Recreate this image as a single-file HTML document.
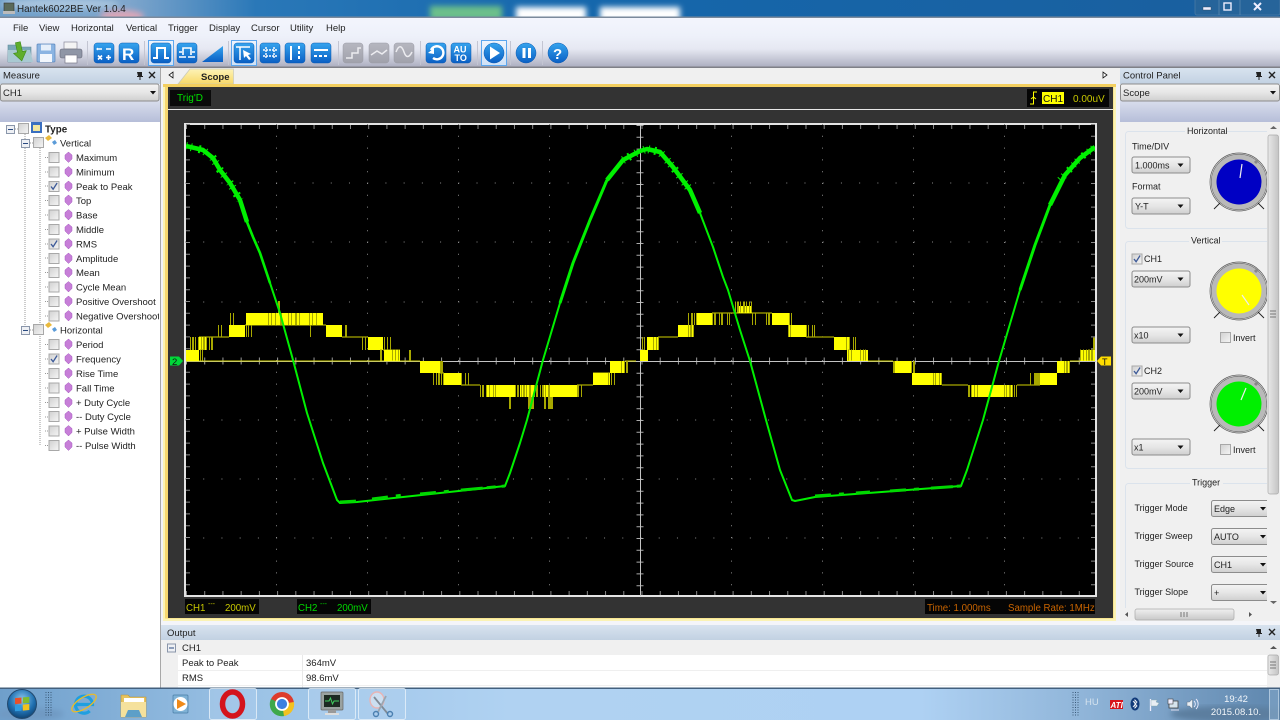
<!DOCTYPE html>
<html><head><meta charset="utf-8"><title>Hantek6022BE</title>
<style>
html,body{margin:0;padding:0;background:#f0f0f0;overflow:hidden}
svg{display:block;font-family:"Liberation Sans",sans-serif;font-size:9.5px}
text{fill:#222}
</style></head><body>
<svg width="1280" height="720" viewBox="0 0 1280 720" xmlns="http://www.w3.org/2000/svg" shape-rendering="auto">
<defs>
<linearGradient id="gT" x1="0" x2="1" y1="0" y2="0"><stop offset="0" stop-color="#6e9fc9"/><stop offset=".1" stop-color="#7fa6cc"/><stop offset=".2" stop-color="#2a78b8"/><stop offset=".45" stop-color="#1567ac"/><stop offset="1" stop-color="#1a5f9e"/></linearGradient>
<linearGradient id="gBar" x1="0" x2="0" y1="0" y2="1"><stop offset="0" stop-color="#f3f5fd"/><stop offset=".35" stop-color="#eef1fa"/><stop offset=".62" stop-color="#e6e8f2"/><stop offset="1" stop-color="#a9abbd"/></linearGradient>
<linearGradient id="gHead" x1="0" x2="0" y1="0" y2="1"><stop offset="0" stop-color="#d8e3ef"/><stop offset="1" stop-color="#c2d1e2"/></linearGradient>
<linearGradient id="gBand" x1="0" x2="0" y1="0" y2="1"><stop offset="0" stop-color="#f5f7fc"/><stop offset="1" stop-color="#b6bed9"/></linearGradient>
<linearGradient id="gCombo" x1="0" x2="0" y1="0" y2="1"><stop offset="0" stop-color="#f4f4f4"/><stop offset=".5" stop-color="#e6e6e6"/><stop offset="1" stop-color="#cfcfcf"/></linearGradient>
<linearGradient id="gCb" x1="0" x2="1" y1="0" y2="1"><stop offset="0" stop-color="#d0d0d0"/><stop offset="1" stop-color="#f6f6f6"/></linearGradient>
<linearGradient id="gBlue" x1="0" x2="0" y1="0" y2="1"><stop offset="0" stop-color="#36a4ee"/><stop offset="1" stop-color="#0a5fc4"/></linearGradient>
<linearGradient id="gGrey" x1="0" x2="0" y1="0" y2="1"><stop offset="0" stop-color="#b6b7c0"/><stop offset="1" stop-color="#a0a1ab"/></linearGradient>
<linearGradient id="gSel" x1="0" x2="0" y1="0" y2="1"><stop offset="0" stop-color="#eef5fd"/><stop offset="1" stop-color="#cfe1f6"/></linearGradient>
<linearGradient id="gTab" x1="0" x2="0" y1="0" y2="1"><stop offset="0" stop-color="#fdf3b8"/><stop offset="1" stop-color="#f8d968"/></linearGradient>
<linearGradient id="gTask" x1="0" x2="1" y1="0" y2="0"><stop offset="0" stop-color="#6f9fcb"/><stop offset=".2" stop-color="#9cc3e6"/><stop offset=".4" stop-color="#b0d2f2"/><stop offset=".72" stop-color="#aed1f3"/><stop offset=".85" stop-color="#8fb4d8"/><stop offset="1" stop-color="#5e86ad"/></linearGradient>
<linearGradient id="gSb" x1="0" x2="1" y1="0" y2="0"><stop offset="0" stop-color="#e8e8e8"/><stop offset="1" stop-color="#c4c4c4"/></linearGradient>
<linearGradient id="gSbH" x1="0" x2="0" y1="0" y2="1"><stop offset="0" stop-color="#f0f0f0"/><stop offset="1" stop-color="#c8c8c8"/></linearGradient>
<radialGradient id="gOrb" cx=".5" cy=".35" r=".7"><stop offset="0" stop-color="#8cc8ee"/><stop offset=".6" stop-color="#1f6fb0"/><stop offset="1" stop-color="#0c3a66"/></radialGradient>
<filter id="b3"><feGaussianBlur stdDeviation="3"/></filter>
<clipPath id="cpR"><rect x="1120" y="122" width="147" height="486"/></clipPath>
<clipPath id="cpT"><rect x="0" y="122" width="159" height="500"/></clipPath>
<clipPath id="cpS"><rect x="186" y="126" width="909" height="468"/></clipPath>
<g id="cb"><rect x=".5" y=".5" width="10" height="10" fill="url(#gCb)" stroke="#a8a8a8"/></g>
<g id="ck"><rect x=".5" y=".5" width="10" height="10" fill="url(#gCb)" stroke="#a8a8a8"/><path d="M2.500 5.500L4.600 8.200L8.600 2" fill="none" stroke="#3d5a98" stroke-width="1.300"/></g>
<path id="dm" d="M4 0L7.500 3L7.500 7L4 10.500L.5 7L.5 3Z" fill="#c77fd8" stroke="#a65cc0" stroke-width=".5"/>
<g id="co"><rect x=".5" y=".5" width="58" height="16" rx="2" fill="url(#gCombo)" stroke="#8c8c8c"/><path d="M46 7h6l-3 3.500z" fill="#111"/></g>
<g id="ct"><rect x=".5" y=".5" width="70" height="16" rx="2" fill="url(#gCombo)" stroke="#8c8c8c"/><path d="M49 7h6l-3 3.500z" fill="#111"/></g>
<g id="knob"><circle r="29" fill="#efefef" stroke="#555" stroke-width=".7"/><circle r="27.800" fill="#b9b9b9" stroke="#666" stroke-width=".6"/><path d="M16 -19L19 -22" stroke="#888" stroke-width="3"/><path d="M-19 21L-25 27M19 21L25 27" stroke="#222" stroke-width=".9"/></g>
<rect id="ib" width="20" height="20" rx="3" fill="url(#gBlue)" stroke="#0d5ab0" stroke-width=".5"/>
<rect id="ig" width="20" height="20" rx="3" fill="url(#gGrey)" stroke="#9a9ba5" stroke-width=".5"/>
<rect id="is" width="25" height="25" fill="url(#gSel)" stroke="#5ba6ee"/>
<circle id="ic" cx="10" cy="10" r="10" fill="url(#gBlue)" stroke="#0d5ab0" stroke-width=".5"/>
<g id="boxm"><rect x=".5" y=".5" width="8" height="8" fill="#eef0f4" stroke="#8a96aa"/><path d="M2 4.500h5" stroke="#2a4a80"/></g>
</defs>

<!-- title bar -->
<rect width="1280" height="18" fill="url(#gT)"/>
<g filter="url(#b3)"><ellipse cx="122" cy="16" rx="22" ry="6" fill="#d9a6b8"/><rect x="430" y="6" width="72" height="14" fill="#6cc08a"/><rect x="516" y="7" width="70" height="14" fill="#fff"/><rect x="600" y="7" width="80" height="14" fill="#fff"/><ellipse cx="60" cy="4" rx="60" ry="6" fill="#a7c4de"/></g>
<rect x="4" y="3" width="10" height="9" fill="#5a6a5a" stroke="#333" stroke-width=".6"/><rect x="3" y="11" width="12" height="3" fill="#bbb"/>
<text x="17" y="12" font-size="9.900" fill="#10202c">Hantek6022BE Ver 1.0.4</text>
<g><rect x="1195" y="-2" width="85" height="17" rx="2" fill="#26649a" stroke="#4a7ba6" stroke-width=".8"/><path d="M1219 0v15M1240 0v15" stroke="#5f8cb2" stroke-width=".7"/><rect x="1203" y="7" width="8" height="3" fill="#eef" stroke="#345" stroke-width=".4"/><rect x="1224" y="3" width="7" height="7" fill="none" stroke="#eef" stroke-width="1.400"/><path d="M1254 3l7 7M1261 3l-7 7" stroke="#eef" stroke-width="2"/></g>
<rect y="16.500" width="1280" height="1.500" fill="#7b8a9c"/>

<!-- menu and toolbar -->
<rect y="18" width="1280" height="50" fill="url(#gBar)"/>
<g font-size="9.500" fill="#1a1a2a">
<text x="13" y="31">File</text><text x="39" y="31">View</text><text x="71" y="31">Horizontal</text><text x="126" y="31">Vertical</text><text x="168" y="31">Trigger</text><text x="209" y="31">Display</text><text x="251" y="31">Cursor</text><text x="290" y="31">Utility</text><text x="326" y="31">Help</text>
</g>
<!-- toolbar icons -->
<path d="M8 45h8l2 2h13v15H8z" fill="#7ba8b8" stroke="#5f8a9a" stroke-width=".6"/><path d="M8 50h22l3 12H8z" fill="#a9c9d2"/><path d="M17 42h5v10h4l-6.500 9L13 52h4z" fill="#5fae2c" stroke="#3e8a18" stroke-width=".6" transform="rotate(-12 20 50)"/>
<rect x="37" y="44" width="18" height="18" rx="1" fill="#8bb4e2" stroke="#5b86bc" stroke-width=".7"/><rect x="41" y="44.500" width="10" height="6" fill="#e6effa"/><rect x="40" y="54" width="12" height="8" fill="#f2f6fc"/>
<rect x="64" y="42" width="13" height="7" fill="#f4f4f4" stroke="#889" stroke-width=".7"/><rect x="60" y="49" width="22" height="9" rx="2" fill="#8f96a6" stroke="#667" stroke-width=".6"/><rect x="65" y="55" width="12" height="8" fill="#fff" stroke="#778" stroke-width=".7"/>
<path d="M87.500 41v24M144.500 41v24M228.500 41v24M338.500 41v24M420.500 41v24M477.500 41v24M510.500 41v24M542.500 41v24" stroke="#c3c5d2"/>
<use href="#ib" x="94" y="43"/><path d="M98 49h4M106 49h5M98 55.500l4 4M102 55.500l-4 4M106 57.500h5M108.500 55v5" stroke="#fff" stroke-width="1.600" fill="none"/><path d="M96 49l2-1.500v3z" fill="#fff"/>
<use href="#ib" x="119" y="43"/><text x="122" y="60" font-size="17" font-weight="bold" style="fill:#fff">R</text>
<use href="#is" x="148.500" y="40.500"/><use href="#ib" x="151" y="43"/><path d="M153 58h4V48h8v10h4" fill="none" stroke="#fff" stroke-width="2"/>
<use href="#ib" x="177" y="43"/><path d="M183 55V48h8v7" fill="none" stroke="#fff" stroke-width="1.600"/><path d="M179 57h7M188 57h7M179 52h3M192 52h3" stroke="#fff" stroke-width="1.600"/>
<path d="M202 62L223 46V62Z" fill="url(#gBlue)"/>
<use href="#is" x="231.500" y="40.500"/><use href="#ib" x="234" y="43"/><path d="M236 47h14M240 47v13" stroke="#fff" stroke-width="1.500"/><path d="M243 50l8 4-3 1 3 4-2 1-3-4-2 2z" fill="#fff"/>
<use href="#ib" x="260" y="43"/><path d="M266 47v12M274 47v12M263 50h14M263 56h14" stroke="#fff" stroke-width="1.400" stroke-dasharray="2 1"/>
<use href="#ib" x="285" y="43"/><path d="M291 46v14" stroke="#fff" stroke-width="2"/><path d="M299 46v14" stroke="#fff" stroke-width="2" stroke-dasharray="3 2"/>
<use href="#ib" x="311" y="43"/><path d="M314 50h14" stroke="#fff" stroke-width="2"/><path d="M314 56h14" stroke="#fff" stroke-width="2" stroke-dasharray="3 2"/>
<use href="#ig" x="343" y="43"/><path d="M346 58h6v-5h6v-5h3" fill="none" stroke="#ececf0" stroke-width="1.500"/>
<use href="#ig" x="369" y="43"/><path d="M371 55l6-4 5 3 5-4" fill="none" stroke="#ececf0" stroke-width="1.500"/>
<use href="#ig" x="394" y="43"/><path d="M396 52c3-8 6-6 8 0s5 6 8 0" fill="none" stroke="#ececf0" stroke-width="1.500"/>
<use href="#ib" x="426" y="43"/><path d="M431 50a6.500 6.500 0 1 1 2 8" fill="none" stroke="#fff" stroke-width="2.400"/><path d="M428 53l6-5v6z" fill="#fff"/>
<use href="#ib" x="451" y="43"/><text x="453.500" y="52.500" font-size="9" font-weight="bold" style="fill:#fff">AU</text><text x="454.500" y="61" font-size="9" font-weight="bold" style="fill:#fff">TO</text>
<use href="#is" x="481.500" y="40.500"/><use href="#ic" x="484" y="43"/><path d="M490 46.500l10 6.500-10 6.500z" fill="#fff"/>
<use href="#ic" x="516" y="43"/><path d="M522.500 48h3v10h-3zM528 48h3v10h-3z" fill="#fff"/>
<use href="#ic" x="548" y="43"/><text x="553" y="59" font-size="15" font-weight="bold" style="fill:#fff">?</text>
<rect y="66.500" width="1280" height="1.500" fill="#7f8087"/>

<!-- left panel -->
<rect y="68" width="160" height="620" fill="#fff"/>
<rect y="68" width="160" height="16" fill="url(#gHead)"/>
<text x="3" y="78.500" font-size="9.500" fill="#4a5a6c">Measure</text>
<path d="M137 72h5v4h1v1h-2.500v3h-1v-3H137v-1h1z" fill="#222"/><path d="M149 72l6 6M155 72l-6 6" stroke="#222" stroke-width="1.400"/>
<rect y="84" width="160" height="38" fill="url(#gBand)"/>
<rect x=".5" y="84" width="158.500" height="17" rx="2" fill="url(#gCombo)" stroke="#8c8c8c"/><text x="3" y="96" font-size="9.500">CH1</text><path d="M150 91h6l-3 3.500z" fill="#111"/>
<rect x="160" y="68" width="1" height="620" fill="#a8a8a8"/>

<!-- tree -->
<g clip-path="url(#cpT)">
<path d="M25 134V330M40 148V445M13 129h6M30 143h3M45 157.500h3M45 172h3M45 186h3M45 200.500h3M45 215h3M45 229.500h3M45 244h3M45 258h3M45 272.500h3M45 287h3M45 301.500h3M45 316h3M30 330h3M45 344.500h3M45 359h3M45 373.500h3M45 388h3M45 402.500h3M45 417h3M45 431h3M45 445.500h3" stroke="#999" stroke-dasharray="1 1" fill="none"/>
<use href="#boxm" x="6" y="125"/><use href="#cb" x="18" y="123"/><rect x="31" y="122" width="11" height="11" fill="#3a6fc0"/><rect x="33" y="125" width="7" height="6" fill="#f2e6a0"/>
<text x="45" y="132.500" font-weight="bold" font-size="9.800" fill="#111">Type</text>
<use href="#boxm" x="21" y="139"/><use href="#cb" x="33" y="137"/><path d="M45 138l4-3 3 3-4 3z" fill="#e9b93c"/><path d="M52 142l3-2 2 3-3 2z" fill="#5b9bd8"/>
<text x="60" y="146.500">Vertical</text>
<use href="#boxm" x="21" y="326"/><use href="#cb" x="33" y="324"/><path d="M45 325l4-3 3 3-4 3z" fill="#e9b93c"/><path d="M52 329l3-2 2 3-3 2z" fill="#5b9bd8"/>
<text x="60" y="333.500">Horizontal</text>
<use href="#cb" x="48.500" y="152"/><use href="#dm" x="64.500" y="152"/><text x="76" y="161">Maximum</text>
<use href="#cb" x="48.500" y="166.500"/><use href="#dm" x="64.500" y="166.500"/><text x="76" y="175.500">Minimum</text>
<use href="#ck" x="48.500" y="181"/><use href="#dm" x="64.500" y="181"/><text x="76" y="190">Peak to Peak</text>
<use href="#cb" x="48.500" y="195"/><use href="#dm" x="64.500" y="195"/><text x="76" y="204">Top</text>
<use href="#cb" x="48.500" y="209.500"/><use href="#dm" x="64.500" y="209.500"/><text x="76" y="218.500">Base</text>
<use href="#cb" x="48.500" y="224"/><use href="#dm" x="64.500" y="224"/><text x="76" y="233">Middle</text>
<use href="#ck" x="48.500" y="238.500"/><use href="#dm" x="64.500" y="238.500"/><text x="76" y="247.500">RMS</text>
<use href="#cb" x="48.500" y="253"/><use href="#dm" x="64.500" y="253"/><text x="76" y="262">Amplitude</text>
<use href="#cb" x="48.500" y="267"/><use href="#dm" x="64.500" y="267"/><text x="76" y="276">Mean</text>
<use href="#cb" x="48.500" y="281.500"/><use href="#dm" x="64.500" y="281.500"/><text x="76" y="290.500">Cycle Mean</text>
<use href="#cb" x="48.500" y="296"/><use href="#dm" x="64.500" y="296"/><text x="76" y="305">Positive Overshoot</text>
<use href="#cb" x="48.500" y="310.500"/><use href="#dm" x="64.500" y="310.500"/><text x="76" y="319.500">Negative Overshoot</text>
<use href="#cb" x="48.500" y="339"/><use href="#dm" x="64.500" y="339"/><text x="76" y="348">Period</text>
<use href="#ck" x="48.500" y="353.500"/><use href="#dm" x="64.500" y="353.500"/><text x="76" y="362.500">Frequency</text>
<use href="#cb" x="48.500" y="368"/><use href="#dm" x="64.500" y="368"/><text x="76" y="377">Rise Time</text>
<use href="#cb" x="48.500" y="382.500"/><use href="#dm" x="64.500" y="382.500"/><text x="76" y="391.500">Fall Time</text>
<use href="#cb" x="48.500" y="397"/><use href="#dm" x="64.500" y="397"/><text x="76" y="406">+ Duty Cycle</text>
<use href="#cb" x="48.500" y="411"/><use href="#dm" x="64.500" y="411"/><text x="76" y="420">-- Duty Cycle</text>
<use href="#cb" x="48.500" y="425.500"/><use href="#dm" x="64.500" y="425.500"/><text x="76" y="434.500">+ Pulse Width</text>
<use href="#cb" x="48.500" y="440"/><use href="#dm" x="64.500" y="440"/><text x="76" y="449">-- Pulse Width</text>
</g>

<!-- tab strip -->
<rect x="161" y="68" width="959" height="16" fill="#f0f0f0"/>
<path d="M178 84L190 69H233.500V84Z" fill="url(#gTab)" stroke="#c9c9b8" stroke-width=".7"/>
<text x="201" y="80" font-weight="bold" font-size="9.500" fill="#222">Scope</text>
<path d="M173 72v6l-4-3z" fill="#fff" stroke="#111" stroke-width=".8"/><path d="M1103 72v6l4-3z" fill="#fff" stroke="#111" stroke-width=".8"/>

<!-- scope frame -->
<rect x="161" y="84" width="959" height="541" fill="#f1f2f8"/>
<rect x="163" y="84" width="953" height="537.500" fill="#fbf3b4"/>
<rect x="163" y="84" width="953" height="3" fill="#f3cf5f"/>
<rect x="165" y="87" width="948.500" height="531.500" fill="#f6d76f"/>
<rect x="168" y="87" width="945" height="531" fill="#333"/>
<rect x="168" y="109" width="945" height="1" fill="#e8e8e8"/>
<rect x="170" y="90" width="41" height="16" fill="#0a0a0a"/><text x="177" y="101" font-size="10" style="fill:#00e000">Trig'D</text>
<rect x="1027" y="89" width="82" height="18" fill="#050505"/>
<path d="M1030 104h3.500V92h3.500M1031 99l2.500-2 2.500 2" fill="none" stroke="#ffff00" stroke-width="1"/>
<rect x="1042" y="92" width="22" height="12" fill="#ffff00"/><text x="1043" y="102" font-size="10" style="fill:#111">CH1</text>
<text x="1073" y="102" font-size="10" style="fill:#c8c800">0.00uV</text>

<!-- screen -->
<rect x="185" y="124" width="911" height="472" fill="#000" stroke="#e4e4e4" stroke-width="2"/>
<g stroke="#8a8a8a" fill="none">
<path d="M185 183H1096M185 242H1096M185 302H1096M185 420H1096M185 479H1096M185 538H1096" stroke-dasharray="1 17.220"/>
<path d="M276.500 124V596M367.500 124V596M458.500 124V596M549.500 124V596M731.500 124V596M822.500 124V596M913.500 124V596M1004.500 124V596" stroke-dasharray="1 10.800"/>
<path d="M186 127H1096M186 593H1096" stroke-width="4" stroke-dasharray="1 17.220" stroke="#888"/>
<path d="M188 124V596M1093 124V596" stroke-width="4" stroke-dasharray="1 10.800" stroke="#888"/>
</g>
<g fill="none">
<path d="M186 361H1096" stroke-width="7" stroke-dasharray="1 17.220" stroke="#999"/>
<path d="M640 125V596" stroke-width="7" stroke-dasharray="1 10.800" stroke="#aaa"/>
<path d="M186 361.500H1096M640.500 125V596" stroke="#c4c4c4"/>
</g>

<g clip-path="url(#cpS)">
<!-- yellow connecting lines -->
<path d="M186 361H420M199 337H229M245 325H326M342 337H368M383 350H400M400 361H420M440 373H444M461 385H480M577 385H593M610 373H593M625 361H636M658 337H678M712 313H772M806 337H834M868 361H893M942 385H968M1017 385H1040M1070 361H1080" stroke="#d0d000" fill="none"/>
<!-- yellow blocks -->
<path fill="#ffff00" d="M186 350H199V361H186ZM198 337H206V350H198ZM229 325H245V337H229ZM246 313H323V325H246ZM326 325H342V337H326ZM368 337H383V350H368ZM384 350H400V361H384ZM420 361H440V373H420ZM444 373H461V385H444ZM486 385H515V397H486ZM520 385H534V397H520ZM543 385H577V397H543ZM593 373H610V385H593ZM610 361H625V373H610ZM640 350H648V361H640ZM647 337H658V350H647ZM678 325H693V337H678ZM697 313H712V325H697ZM738 306H752V313H738ZM772 313H789V325H772ZM789 325H806V337H789ZM834 337H849V350H834ZM847 350H868V361H847ZM893 361H912V373H893ZM912 373H942V385H912ZM972 385H1012V397H972ZM1040 373H1057V385H1040ZM1057 361H1070V373H1057ZM1080 350H1093V361H1080Z"/>
<!-- spikes -->
<g fill="none" stroke="#a8a800">
<path d="M190 343.500H205" stroke-width="13" stroke-dasharray="1 1 2 1 1 2 1 2"/>
<path d="M206 343.500H214" stroke-width="13" stroke-dasharray="1 2 1 1 2"/>
<path d="M200 355H203" stroke-width="11" stroke-dasharray="1 1"/>
<path d="M218 331H252" stroke-width="12" stroke-dasharray="1 2 1 24 1 1 1 2 1"/>
<path d="M230 319H244" stroke-width="12" stroke-dasharray="1 2 1 10"/>
<path d="M268 319H320" stroke-width="12" stroke-dasharray="1 2 1 3 1 4 2 6 1 2 1 3 2 2 1 9"/>
<path d="M278 307H280" stroke-width="12"/>
<path d="M310 331H311" stroke-width="12"/>
<path d="M345 331H347" stroke-width="12"/>
<path d="M362 343.500H367" stroke-width="13" stroke-dasharray="1 2 1"/>
<path d="M384 343.500H392" stroke-width="13" stroke-dasharray="1 2 1 2 1"/>
<path d="M380 355H400" stroke-width="11" stroke-dasharray="2 10 1 2 1 2 1"/>
<path d="M409 355.500H411" stroke-width="11"/>
<path d="M440 367H443" stroke-width="12"/>
<path d="M433 379H444" stroke-width="12" stroke-dasharray="1 2 1 1 2 1 1"/>
<path d="M461 379H470" stroke-width="12" stroke-dasharray="1 3 1 2 1"/>
<path d="M480 391H497" stroke-width="12" stroke-dasharray="1 1 2 2 1 2 1 3 1"/>
<path d="M515 391H550" stroke-width="12" stroke-dasharray="1 1 2 2 1 1 2 1 1 2 2 3 1 1 2 2 1 1 2"/>
<path d="M577 391H583" stroke-width="12" stroke-dasharray="2 2 1"/>
<path d="M509 403H511M528 403H534M544 403H546M548 403H553" stroke-width="12"/>
<path d="M608 379H616" stroke-width="12" stroke-dasharray="1 2 1 2 1"/>
<path d="M621 367H628" stroke-width="12" stroke-dasharray="1 2 1"/>
<path d="M642 343.500H660" stroke-width="13" stroke-dasharray="1 1 1 8 1 2 1"/>
<path d="M688 331H695" stroke-width="12" stroke-dasharray="1 1 2 1 1"/>
<path d="M688 319H697" stroke-width="12" stroke-dasharray="1 2 2 1 1"/>
<path d="M712 319H730" stroke-width="12" stroke-dasharray="1 1 2 3 1 1 2 4 1"/>
<path d="M735 307H752" stroke-width="11" stroke-dasharray="1 1 2 1 1 2 2 1 1 2"/>
<path d="M752 319H770" stroke-width="12" stroke-dasharray="1 2 1 10 1"/>
<path d="M789 319H793" stroke-width="12" stroke-dasharray="1 1 1"/>
<path d="M806 331H815" stroke-width="12" stroke-dasharray="1 1 1 3 1 1 1"/>
<path d="M788 331H791" stroke-width="12" stroke-dasharray="1 1"/>
<path d="M846 343.500H856" stroke-width="13" stroke-dasharray="1 2 1 3 1"/>
<path d="M848 355H852M860 355H868" stroke-width="11" stroke-dasharray="1 2 1 1"/>
<path d="M893 367H915" stroke-width="12" stroke-dasharray="2 16 1 1 2"/>
<path d="M933 379H943" stroke-width="12" stroke-dasharray="1 1 1 3 1"/>
<path d="M968 391H978" stroke-width="12" stroke-dasharray="2 1 1 2 1"/>
<path d="M1004 391H1018" stroke-width="12" stroke-dasharray="1 1 1 2 2 1 1 1 1 1"/>
<path d="M1030 379H1031M1034 379H1040" stroke-width="12"/>
<path d="M1064 367H1071" stroke-width="12" stroke-dasharray="1 1 2 1 1"/>
<path d="M1080 355H1093" stroke-width="11" stroke-dasharray="1 2 1 2 1"/>
<path d="M1093 344H1095" stroke-width="13"/>
</g>
<path d="M1093 350H1096V361H1093Z" fill="#ffff00"/>
<!-- green trace -->
<path fill="none" stroke="#00f000" stroke-width="2" stroke-linejoin="round" d="M186 146L203 150L213 158L220 170L230 183L240 200L247 222L253 237L260 253L270 283L280 313L293 360L307 413L323 463L337 500L340 503L357 502L505 486L510 473L520 443L527 420L543 360L560 303L573 263L590 220L607 180L623 160L640 151L647 149L660 152L673 167L690 190L700 213L713 247L723 277L728 290L740 330L750 361L766 420L780 470L792 500L795 501L815 497L961 486L967 470L983 420L999 361L1020 290L1035 245L1050 205L1065 175L1080 158L1095 147"/>
<!-- green noise: thick solid core, sparse spikes -->
<g fill="none" stroke="#00f000" stroke-linejoin="round">
<path d="M186 146L203 150L213 158L220 170L230 183L240 200L247 222" stroke-width="4.500"/>
<path d="M607 180L623 160L640 151L647 149L660 152L673 167L690 190L700 213" stroke-width="4.500"/>
<path d="M1050 205L1065 175L1080 158L1095 147" stroke-width="4.500"/>
<path d="M560 303L573 263L590 220L607 180" stroke-width="3"/>
<path d="M1020 290L1035 245L1050 205" stroke-width="3"/>
<path d="M247 222L253 237L260 253L270 283" stroke-width="2.600"/>
<path d="M186 146L203 150L213 158L220 170L230 183L240 200" stroke-width="8" stroke-dasharray="1 4 1 7 2 5 1 9"/>
<path d="M623 160L640 151L647 149L660 152L673 167L690 190" stroke-width="8" stroke-dasharray="1 5 2 6 1 8 1 4"/>
<path d="M1060 180L1080 158L1095 147" stroke-width="7" stroke-dasharray="1 4 1 7 2 5"/>
<path d="M340 502L357 501M372 499L404 495M420 494L505 486M815 496L870 492M890 491L961 486" stroke-width="3" stroke-dasharray="16 8 5 12 22 4 9 6" stroke="#00d800"/>
</g>
</g>

<!-- markers -->
<path d="M170 356.500h9l4 4.500-4 4.500h-9z" fill="#00d838"/><text x="172" y="365" font-size="9.500" style="fill:#111">2</text>
<path d="M1111 356.500h-10l-4 4.500 4 4.500h10z" fill="#ffdd00"/><text x="1102" y="365" font-size="9" style="fill:#111">T</text>

<!-- status -->
<rect x="185" y="599" width="74" height="15" fill="#050505"/><rect x="297" y="599" width="74" height="15" fill="#050505"/><rect x="925" y="599" width="170" height="15" fill="#050505"/>
<g font-size="9.700">
<text x="186" y="611" style="fill:#c8c800">CH1</text><text x="208" y="606" font-size="7" style="fill:#c8c800">---</text><text x="225" y="611" style="fill:#c8c800">200mV</text>
<text x="298" y="611" style="fill:#00d800">CH2</text><text x="320" y="606" font-size="7" style="fill:#00d800">---</text><text x="337" y="611" style="fill:#00d800">200mV</text>
<text x="927" y="611" style="fill:#c86400">Time: 1.000ms</text><text x="1008" y="611" style="fill:#c86400">Sample Rate: 1MHz</text>
</g>

<!-- right panel -->
<rect x="1120" y="68" width="160" height="16" fill="url(#gHead)"/>
<text x="1123" y="78.500" fill="#4a5a6c">Control Panel</text>
<path d="M1256 72h5v4h1v1h-2.500v3h-1v-3H1256v-1h1z" fill="#222"/><path d="M1269 72l6 6M1275 72l-6 6" stroke="#222" stroke-width="1.400"/>
<rect x="1120" y="84" width="160" height="38" fill="url(#gBand)"/>
<rect x="1120.500" y="84" width="159" height="17" rx="2" fill="url(#gCombo)" stroke="#8c8c8c"/><text x="1123" y="96" font-size="9.500">Scope</text><path d="M1270 91h6l-3 3.500z" fill="#111"/>
<rect x="1120" y="122" width="160" height="503" fill="#f0f0f0"/>
<g clip-path="url(#cpR)" font-size="9">
<rect x="1125.500" y="131.500" width="150" height="97" rx="3" fill="none" stroke="#dbe3ec"/><rect x="1185" y="126" width="42" height="10" fill="#f0f0f0"/>
<text x="1187" y="134" fill="#333">Horizontal</text>
<text x="1132" y="149.500" fill="#333">Time/DIV</text>
<use href="#co" x="1131.500" y="156.500"/><text x="1135" y="168.500" fill="#333">1.000ms</text>
<text x="1132" y="189.500" fill="#333">Format</text>
<use href="#co" x="1131.500" y="197.500"/><text x="1135" y="209.500" fill="#333">Y-T</text>
<use href="#knob" x="1239" y="182"/><circle cx="1239" cy="182" r="22.500" fill="#0000c4"/><path d="M1240 178L1242 164" stroke="#eee" stroke-width="1.200"/>

<rect x="1125.500" y="241.500" width="150" height="227" rx="3" fill="none" stroke="#dbe3ec"/><rect x="1189" y="236" width="33" height="10" fill="#f0f0f0"/>
<text x="1191" y="243.500" fill="#333">Vertical</text>
<use href="#ck" x="1131.500" y="253.500"/><text x="1144" y="262" fill="#333">CH1</text>
<use href="#co" x="1131.500" y="270.500"/><text x="1134" y="282.500" fill="#333">200mV</text>
<use href="#knob" x="1239" y="291"/><circle cx="1239" cy="291" r="22.500" fill="#ffff00"/><path d="M1242 295L1249 305" stroke="#eee" stroke-width="1.200"/>
<use href="#co" x="1131.500" y="326.500"/><text x="1134" y="338.500" fill="#333">x10</text>
<use href="#cb" x="1220" y="332"/><text x="1233" y="341" fill="#333">Invert</text>
<use href="#ck" x="1131.500" y="365.500"/><text x="1144" y="374" fill="#333">CH2</text>
<use href="#co" x="1131.500" y="382.500"/><text x="1134" y="394.500" fill="#333">200mV</text>
<use href="#knob" x="1239" y="404"/><circle cx="1239" cy="404" r="22.500" fill="#00f000"/><path d="M1241 400L1246 388" stroke="#eee" stroke-width="1.200"/>
<use href="#co" x="1131.500" y="438.500"/><text x="1134" y="450.500" fill="#333">x1</text>
<use href="#cb" x="1220" y="444"/><text x="1233" y="453" fill="#333">Invert</text>

<rect x="1125.500" y="483.500" width="150" height="140" rx="3" fill="none" stroke="#dbe3ec"/><rect x="1190" y="477" width="33" height="10" fill="#f0f0f0"/>
<text x="1192" y="485.500" fill="#333">Trigger</text>
<text x="1134.500" y="511" fill="#333">Trigger Mode</text><use href="#ct" x="1211" y="500"/><text x="1214" y="512" fill="#333">Edge</text>
<text x="1134.500" y="539" fill="#333">Trigger Sweep</text><use href="#ct" x="1211" y="528"/><text x="1214" y="540" fill="#333">AUTO</text>
<text x="1134.500" y="567" fill="#333">Trigger Source</text><use href="#ct" x="1211" y="556"/><text x="1214" y="568" fill="#333">CH1</text>
<text x="1134.500" y="595" fill="#333">Trigger Slope</text><use href="#ct" x="1211" y="584"/><text x="1214" y="596" fill="#333">+</text>
</g>
<!-- right scrollbars -->
<rect x="1267" y="122" width="13" height="486" fill="#f0f0f0"/>
<path d="M1270 129l3.500-3 3.500 3z" fill="#666"/><path d="M1270 601l3.500 3 3.500-3z" fill="#666"/>
<rect x="1268" y="135" width="10.500" height="359" rx="2" fill="url(#gSb)" stroke="#a9a9a9" stroke-width=".7"/>
<path d="M1270 311h6M1270 314h6M1270 317h6" stroke="#777"/>
<path d="M1128 612v5l-3-2.500zM1249 612v5l3-2.500z" fill="#555"/>
<rect x="1135" y="609" width="99" height="11" rx="2" fill="url(#gSbH)" stroke="#a9a9a9" stroke-width=".7"/>
<path d="M1181 612v5M1184 612v5M1187 612v5" stroke="#777"/>

<!-- output -->
<rect x="161" y="621" width="1119" height="4" fill="#f4f5f9"/>
<rect x="161" y="625" width="1119" height="15" fill="url(#gHead)"/>
<text x="167" y="636" fill="#4a5a6c">Output</text>
<path d="M1256 629h5v4h1v1h-2.500v3h-1v-3H1256v-1h1z" fill="#222"/><path d="M1269 629l6 6M1275 629l-6 6" stroke="#222" stroke-width="1.400"/>
<rect x="161" y="640" width="1106" height="48" fill="#f0f0f0"/>
<rect x="178" y="655" width="1089" height="33" fill="#fff"/>
<path d="M178 670.500H1267M178 685.500H1267" stroke="#efefef"/><path d="M302.500 655V688" stroke="#e8e8e8"/>
<use href="#boxm" x="167" y="643.500"/>
<text x="182" y="651">CH1</text>
<text x="182" y="666">Peak to Peak</text><text x="306" y="666">364mV</text>
<text x="182" y="681">RMS</text><text x="306" y="681">98.6mV</text>
<rect x="1267" y="640" width="13" height="48" fill="#f0f0f0"/><path d="M1270 649l3.500-3 3.500 3z" fill="#555"/>
<rect x="1268" y="655" width="10.500" height="20" rx="2" fill="url(#gSb)" stroke="#a9a9a9" stroke-width=".7"/><path d="M1270 662h6M1270 665h6M1270 668h6" stroke="#777"/>

<!-- taskbar -->
<rect y="688" width="1280" height="32" fill="url(#gTask)"/>
<rect y="687.500" width="1280" height="1.500" fill="#43607e"/>
<g filter="url(#b3)"><ellipse cx="30" cy="714" rx="34" ry="6" fill="#6f99c2"/><ellipse cx="1230" cy="714" rx="60" ry="8" fill="#5b7e9f"/></g>
<circle cx="22" cy="704" r="14.500" fill="url(#gOrb)" stroke="#23496e"/>
<g transform="translate(22 704) skewY(-5)"><rect x="-7" y="-6.500" width="6.500" height="6" fill="#e8502a"/><rect x=".8" y="-6.500" width="6.500" height="6" fill="#7fbc30"/><rect x="-7" y=".7" width="6.500" height="6" fill="#2f9be0"/><rect x=".8" y=".7" width="6.500" height="6" fill="#f2c21c"/></g>
<path d="M46 692v24M48.500 692v24M51 692v24" stroke="#3a5a78" stroke-dasharray="1 1.500" stroke-width="1"/>
<path d="M76 704.500h16.500a8.500 8.500 0 1 0-2.800 6.500" fill="none" stroke="#1f9fe0" stroke-width="3.200"/><ellipse cx="84" cy="703" rx="14" ry="5.500" fill="none" stroke="#e8bb2a" stroke-width="1.300" transform="rotate(-32 84 703)"/>
<path d="M121 695h7l2 2h16v20h-25z" fill="#e7c35e" stroke="#b9943a" stroke-width=".6"/><rect x="124" y="698" width="20" height="4" fill="#fff"/><path d="M121 702h25v15h-25z" fill="#f5e19c"/><path d="M128 710h11l3 7h-17z" fill="#5d9fc8"/>
<rect x="173" y="695" width="15" height="18" rx="1" fill="#7fb2d6" stroke="#4a7da6" stroke-width=".7"/><circle cx="180.500" cy="704" r="7" fill="#fff"/><path d="M177 699l9 5-9 5z" fill="#f08a1a"/>
<g fill="#b7d5f0" fill-opacity=".35" stroke="#e7f1fa" stroke-opacity=".8"><rect x="209.500" y="688.500" width="47" height="31" rx="2"/><rect x="308.500" y="688.500" width="47" height="31" rx="2"/><rect x="358.500" y="688.500" width="47" height="31" rx="2"/></g>
<ellipse cx="232.500" cy="704" rx="10" ry="12" fill="none" stroke="#d4141c" stroke-width="5.500"/>
<circle cx="282" cy="704" r="12" fill="#dd3b2c"/><path d="M282 704L271 699A12 12 0 0 0 286 715.500Z" fill="#3ea84a"/><path d="M282 704L294 702A12 12 0 0 1 284 716Z" fill="#f3c21f"/><circle cx="282" cy="704" r="6" fill="#3d7fe0" stroke="#fff" stroke-width="1.800"/>
<rect x="321" y="692" width="22" height="18" rx="1" fill="#9aa2a0" stroke="#666" stroke-width=".7"/><rect x="324" y="695" width="16" height="12" fill="#1d2a22"/><path d="M325 701h4l1.500-3 2 6 1.500-3h5" fill="none" stroke="#40d060"/><rect x="328" y="710" width="8" height="3" fill="#999"/><rect x="325" y="713" width="14" height="2" fill="#ddd"/>
<g fill="none" stroke-width="1.400"><ellipse cx="377" cy="700" rx="7" ry="8" stroke="#e8b4b4" fill="#eef2f6" fill-opacity=".5"/><path d="M374 697l14 17" stroke="#7f8a96" stroke-width="1.800"/><path d="M386 696l-8 16" stroke="#9aa6b2" stroke-width="1.800"/><circle cx="376" cy="714" r="2.500" stroke="#4a7fb0"/><circle cx="390" cy="714" r="2.500" stroke="#4a7fb0"/></g>
<path d="M1073 692v24M1075.500 692v24M1078 692v24" stroke="#3a5a78" stroke-dasharray="1 1.500"/>
<text x="1085" y="705" font-size="9.500" style="fill:#d4e2ee">HU</text>
<rect x="1110" y="700" width="13" height="9" fill="#d8141c"/><text x="1110.500" y="708" font-size="8" font-weight="bold" style="fill:#fff;font-style:italic">ATI</text>
<ellipse cx="1135" cy="704" rx="4.500" ry="6.500" fill="#103a7a"/><path d="M1133 701l4 5-2 2v-8l2 2-4 5" fill="none" stroke="#fff" stroke-width=".8"/>
<path d="M1150.500 699v12" stroke="#eef" stroke-width="1.300"/><path d="M1151 700h6l-1 2 3 1-2 3h-6z" fill="#e8eef4" stroke="#8aa" stroke-width=".4"/>
<rect x="1169" y="701" width="9" height="7" fill="#d6e4ee" stroke="#444" stroke-width=".8"/><rect x="1168" y="699" width="5" height="5" fill="#eef" stroke="#444" stroke-width=".6"/><path d="M1171 710h8" stroke="#dde" stroke-width="1"/>
<path d="M1187 702h2.500l3-3v10l-3-3H1187z" fill="#e8eef4" stroke="#678" stroke-width=".5"/><path d="M1194 701a4 4 0 0 1 0 6M1196 699a7 7 0 0 1 0 10" fill="none" stroke="#eef" stroke-width=".9"/>
<text x="1236" y="702" text-anchor="middle" font-size="9.500" style="fill:#f2f6fa">19:42</text>
<text x="1236" y="715" text-anchor="middle" font-size="9.500" style="fill:#f2f6fa">2015.08.10.</text>
<rect x="1269.500" y="689.500" width="9" height="30" fill="#84a8ca" fill-opacity=".6" stroke="#c8dcec" stroke-opacity=".7"/>
</svg>
</body></html>
